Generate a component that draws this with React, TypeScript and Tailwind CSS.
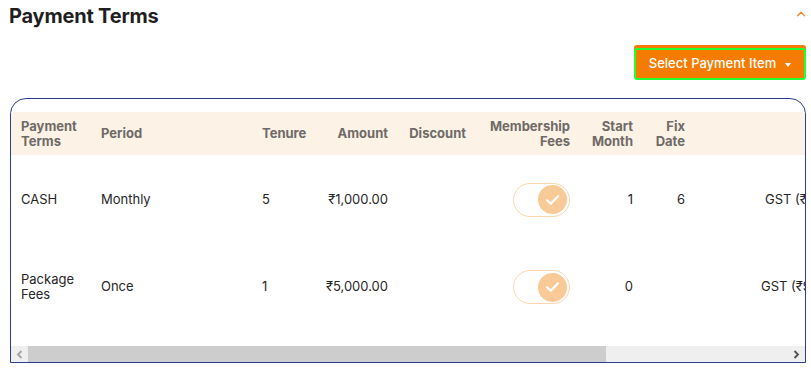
import { ChevronUp } from "lucide-react";

const FONT = { fontFamily: "Inter, 'Noto Sans', sans-serif" };

// ── Toggle (checked, disabled look) ───────────────────────────────────────────

function Toggle() {
  return (
    <div className="inline-flex h-[34px] w-[57px] items-center justify-end rounded-full border border-[#fcd6ae] bg-white pr-[2px]">
      <div className="flex h-[29px] w-[29px] items-center justify-center rounded-full bg-[#f9ca97]">
        <svg width="15" height="12" viewBox="0 0 15 12" fill="none">
          <path d="M2 6.2 L5.8 9.8 L13 2.3" stroke="#fff" strokeWidth="2.2" strokeLinecap="round" strokeLinejoin="round" />
        </svg>
      </div>
    </div>
  );
}

// ── Data ─────────────────────────────────────────────────────────────────────

const rows = [
  { terms: "CASH", period: "Monthly", tenure: "5", amount: "₹1,000.00", start: "1", fix: "6", gst: "GST (₹180.00)", gstPad: "pl-[70px]" },
  { terms: "Package Fees", period: "Once", tenure: "1", amount: "₹5,000.00", start: "0", fix: "", gst: "GST (₹900.00)", gstPad: "pl-[66px]" },
];

export default function App() {
  return (
    <div className="h-[368px] w-[811px] overflow-hidden bg-white text-[#222]" style={FONT}>
      {/* Header */}
      <div className="flex items-start justify-between pl-[9px] pr-[3px] pt-[3px]">
        <h2 className="text-[20px] font-bold leading-[26px] tracking-[-0.2px] text-[#1f1f1f]">Payment Terms</h2>
        <ChevronUp className="mt-[4px] h-[14px] w-[14px] text-[#f58a1f]" strokeWidth={2.2} />
      </div>

      {/* Action */}
      <div className="mt-[19px] flex justify-end pr-[5px]">
        <button className="flex h-[32px] w-[172px] items-center justify-center gap-[9px] rounded-[3px] border-2 border-[#22ff33] bg-[#f57c00] text-[13px] font-medium text-white shadow-[0_-3px_0_#f57c00]">
          Select Payment Item
          <span className="mt-[1px] h-0 w-0 border-x-[3.5px] border-t-[4px] border-x-transparent border-t-white" />
        </button>
      </div>

      {/* Table card */}
      <div className="ml-[10px] mt-[18px] w-[796px] overflow-hidden rounded-t-[16px] border border-[#2e3d8f] pt-[13px]">
        <div className="overflow-hidden">
          <table className="w-[1000px] table-fixed border-collapse text-[13px]">
            <colgroup>
              <col className="w-[80px]" />
              <col className="w-[161px]" />
              <col className="w-[66px]" />
              <col className="w-[80px]" />
              <col className="w-[78px]" />
              <col className="w-[104px]" />
              <col className="w-[63px]" />
              <col className="w-[52px]" />
              <col className="w-[316px]" />
            </colgroup>
            <thead>
              <tr className="h-[43px] bg-[#fdf2e6] text-[13px] font-bold leading-[15px] text-[#6e6a66]">
                <th className="pl-[10px] text-left font-bold">Payment<br />Terms</th>
                <th className="pl-[10px] text-left font-bold">Period</th>
                <th className="pl-[10px] text-left font-bold">Tenure</th>
                <th className="pr-[10px] text-right font-bold">Amount</th>
                <th className="pr-[10px] text-right font-bold">Discount</th>
                <th className="pr-[10px] text-right font-bold">Membership<br />Fees</th>
                <th className="pr-[10px] text-right font-bold">Start<br />Month</th>
                <th className="pr-[10px] text-right font-bold">Fix<br />Date</th>
                <th />
              </tr>
            </thead>
            <tbody className="text-[#262626]">
              {rows.map((r, i) => (
                <tr key={r.terms} className={i === 0 ? "h-[89px]" : "h-[86px]"}>
                  <td className="pl-[10px] leading-[15px]">{r.terms === "Package Fees" ? <>Package<br />Fees</> : r.terms}</td>
                  <td className="pl-[10px]">{r.period}</td>
                  <td className="pl-[10px]">{r.tenure}</td>
                  <td className="pr-[10px] text-right">{r.amount}</td>
                  <td />
                  <td className="pr-[10px] text-right"><div className="flex justify-end"><Toggle /></div></td>
                  <td className="pr-[10px] text-right">{r.start}</td>
                  <td className="pr-[10px] text-right">{r.fix}</td>
                  <td className={`${r.gstPad} whitespace-nowrap text-left`}>{r.gst}</td>
                </tr>
              ))}
            </tbody>
          </table>
        </div>

        {/* Horizontal scrollbar */}
        <div className="mt-[16px] flex h-[16px] items-stretch bg-[#efefef]">
          <div className="flex w-[17px] items-center justify-center">
            <svg width="7" height="9" viewBox="0 0 7 9"><path d="M5.5 1 L2 4.5 L5.5 8" stroke="#a3a3a3" strokeWidth="1.8" fill="none" /></svg>
          </div>
          <div className="w-[578px] bg-[#cdcdcd]" />
          <div className="flex-1" />
          <div className="flex w-[18px] items-center justify-center">
            <svg width="7" height="9" viewBox="0 0 7 9"><path d="M1.5 1 L5 4.5 L1.5 8" stroke="#505050" strokeWidth="1.8" fill="none" /></svg>
          </div>
        </div>
      </div>
    </div>
  );
}
